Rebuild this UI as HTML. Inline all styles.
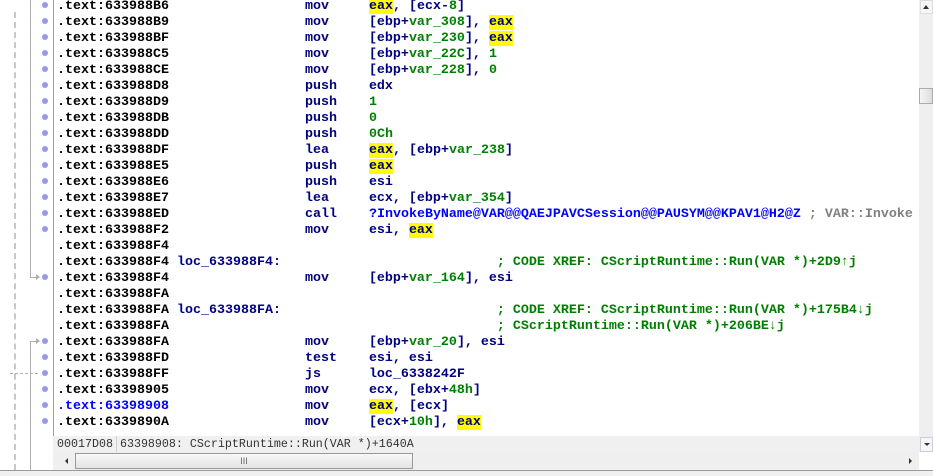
<!DOCTYPE html>
<html><head><meta charset="utf-8"><style>
body{margin:0;width:933px;height:476px;overflow:hidden;background:#fff;position:relative;font-family:"Liberation Mono",monospace}
.code{position:absolute;left:57px;top:-1px;font-size:13.33px;font-weight:bold;line-height:16px;white-space:pre;color:#000}
.n{color:#000080}.g{color:#008000}.y{background:#ffff00;color:#000080}.c{color:#008000}.gr{color:#808080}.b{color:#0000ff}
.dot{position:absolute;left:42px;width:6px;height:6px;border-radius:50%;background:#9a9ae6}
.ab{position:absolute}
</style></head><body>
<div class="ab" style="left:53px;top:0;width:1px;height:436px;background:#a0a0a0"></div>
<div class="ab" style="left:14px;top:12px;width:0;height:458px;border-left:2px dashed #c8c8c8"></div>
<div class="ab" style="left:30px;top:0;width:1px;height:277px;background:#b0b0b0"></div>
<div class="ab" style="left:30px;top:277px;width:8px;height:1px;background:#b0b0b0"></div>
<div class="ab" style="left:36px;top:274px;border-left:4px solid #b0b0b0;border-top:3px solid transparent;border-bottom:3px solid transparent"></div>
<div class="ab" style="left:30px;top:341px;width:1px;height:129px;background:#b0b0b0"></div>
<div class="ab" style="left:30px;top:341px;width:8px;height:1px;background:#b0b0b0"></div>
<div class="ab" style="left:36px;top:338px;border-left:4px solid #b0b0b0;border-top:3px solid transparent;border-bottom:3px solid transparent"></div>
<div class="ab" style="left:10px;top:373px;width:28px;height:0;border-top:1px dashed #b0b0b0"></div>
<div class="dot" style="top:2px"></div><div class="dot" style="top:18px"></div><div class="dot" style="top:34px"></div><div class="dot" style="top:50px"></div><div class="dot" style="top:66px"></div><div class="dot" style="top:82px"></div><div class="dot" style="top:98px"></div><div class="dot" style="top:114px"></div><div class="dot" style="top:130px"></div><div class="dot" style="top:146px"></div><div class="dot" style="top:162px"></div><div class="dot" style="top:178px"></div><div class="dot" style="top:194px"></div><div class="dot" style="top:210px"></div><div class="dot" style="top:226px"></div><div class="dot" style="top:274px"></div><div class="dot" style="top:338px"></div><div class="dot" style="top:354px"></div><div class="dot" style="top:370px"></div><div class="dot" style="top:386px"></div><div class="dot" style="top:402px"></div><div class="dot" style="top:418px"></div>
<div class="code">.text:633988B6                 <span class="n">mov     <span class="y">eax</span>, [ecx-<span class="g">8</span>]</span>
.text:633988B9                 <span class="n">mov     [ebp+<span class="g">var_308</span>], <span class="y">eax</span></span>
.text:633988BF                 <span class="n">mov     [ebp+<span class="g">var_230</span>], <span class="y">eax</span></span>
.text:633988C5                 <span class="n">mov     [ebp+<span class="g">var_22C</span>], <span class="g">1</span></span>
.text:633988CE                 <span class="n">mov     [ebp+<span class="g">var_228</span>], <span class="g">0</span></span>
.text:633988D8                 <span class="n">push    edx</span>
.text:633988D9                 <span class="n">push    <span class="g">1</span></span>
.text:633988DB                 <span class="n">push    <span class="g">0</span></span>
.text:633988DD                 <span class="n">push    <span class="g">0Ch</span></span>
.text:633988DF                 <span class="n">lea     <span class="y">eax</span>, [ebp+<span class="g">var_238</span>]</span>
.text:633988E5                 <span class="n">push    <span class="y">eax</span></span>
.text:633988E6                 <span class="n">push    esi</span>
.text:633988E7                 <span class="n">lea     ecx, [ebp+<span class="g">var_354</span>]</span>
.text:633988ED                 <span class="n">call    <span class="b">?InvokeByName@VAR@@QAEJPAVCSession@@PAUSYM@@KPAV1@H2@Z</span> <span class="gr">; VAR::Invoke</span></span>
.text:633988F2                 <span class="n">mov     esi, <span class="y">eax</span></span>
.text:633988F4
.text:633988F4 <span class="n">loc_633988F4:</span>                           <span class="c">; CODE XREF: CScriptRuntime::Run(VAR *)+2D9&#8593;j</span>
.text:633988F4                 <span class="n">mov     [ebp+<span class="g">var_164</span>], esi</span>
.text:633988FA
.text:633988FA <span class="n">loc_633988FA:</span>                           <span class="c">; CODE XREF: CScriptRuntime::Run(VAR *)+175B4&#8595;j</span>
.text:633988FA                                         <span class="c">; CScriptRuntime::Run(VAR *)+206BE&#8595;j</span>
.text:633988FA                 <span class="n">mov     [ebp+<span class="g">var_20</span>], esi</span>
.text:633988FD                 <span class="n">test    esi, esi</span>
.text:633988FF                 <span class="n">js      loc_6338242F</span>
.text:63398905                 <span class="n">mov     ecx, [ebx+<span class="g">48h</span>]</span>
<span class="b">.text:63398908</span>                 <span class="n">mov     <span class="y">eax</span>, [ecx]</span>
.text:6339890A                 <span class="n">mov     [ecx+<span class="g">10h</span>], <span class="y">eax</span></span></div>
<div class="ab" style="left:919px;top:0;width:14px;height:452px;background:#efefef"></div>
<div class="ab" style="left:920px;top:0;width:13px;height:14px;background:#f6f6f6;border:1px solid #ddd;box-sizing:border-box"></div>
<div class="ab" style="left:923px;top:5px;border-bottom:4px solid #333;border-left:3px solid transparent;border-right:3px solid transparent"></div>
<div class="ab" style="left:919px;top:88px;width:14px;height:16px;background:linear-gradient(90deg,#f4f4f4,#ddd);border:1px solid #aaa;box-sizing:border-box"></div>
<div class="ab" style="left:920px;top:437px;width:13px;height:15px;background:#f6f6f6;border:1px solid #ccd;box-sizing:border-box"></div>
<div class="ab" style="left:924px;top:443px;border-top:3px solid #333;border-left:3px solid transparent;border-right:3px solid transparent"></div>
<div class="ab" style="left:53px;top:436px;width:866px;height:16px;background:#f0f0f0"></div>
<div class="ab" style="left:116px;top:436px;width:1px;height:16px;background:#d0d0d0"></div>
<div class="ab" style="left:57px;top:436px;font-size:11.67px;line-height:16px;color:#333;white-space:pre">00017D08 63398908: CScriptRuntime::Run(VAR *)+1640A</div>
<div class="ab" style="left:53px;top:452px;width:866px;height:18px;background:#efefef"></div>
<div class="ab" style="left:65px;top:458px;border-right:3px solid #333;border-top:3px solid transparent;border-bottom:3px solid transparent"></div>
<div class="ab" style="left:75px;top:453px;width:338px;height:16px;background:linear-gradient(#f8f8f8,#e4e4e4);border:1px solid #999;box-sizing:border-box;text-align:center;font-size:9px;line-height:14px;color:#666;font-family:'Liberation Sans',sans-serif">III</div>
<div class="ab" style="left:909px;top:458px;border-left:3px solid #333;border-top:3px solid transparent;border-bottom:3px solid transparent"></div>
<div class="ab" style="left:0;top:470px;width:933px;height:1px;background:#999"></div>
<div class="ab" style="left:0;top:471px;width:933px;height:5px;background:#f0f0f0"></div>
</body></html>
